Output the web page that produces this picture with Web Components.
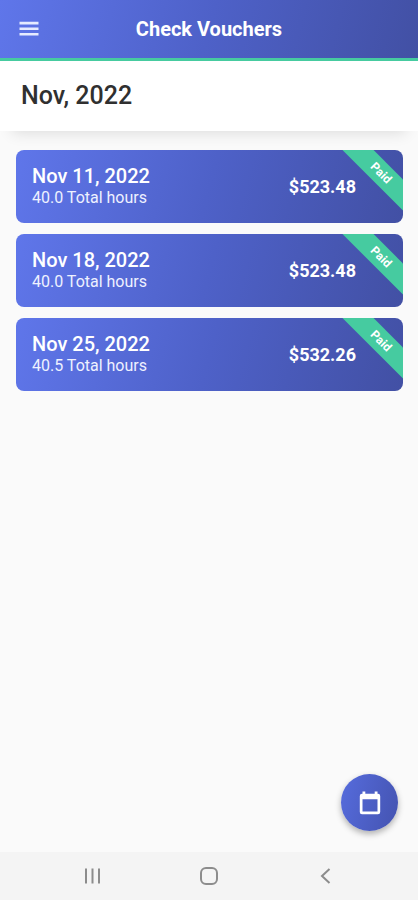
<!DOCTYPE html>
<html lang="en">
<head>
<meta charset="utf-8">
<meta name="viewport" content="width=device-width, initial-scale=1">
<title>Check Vouchers</title>
<style>
  html, body { margin: 0; height: 100%; }
  body {
    font-family: Roboto, "Liberation Sans", sans-serif;
    background: #fafafa;
    color: #303030;
    --brand: linear-gradient(105deg, #5f76ea 0%, #4e61c8 50%, #4250a4 100%);
    --accent: #46cba0;
  }
</style>
</head>
<body>
<voucher-page></voucher-page>

<script>
  // shared helper: every element renders a static template in an open root
  class BaseElement extends HTMLElement {
    constructor() {
      super();
      this.attachShadow({ mode: 'open' });
      const tpl = document.createElement('template');
      tpl.innerHTML = this.render();
      this.shadowRoot.appendChild(tpl.content.cloneNode(true));
    }
  }

  class AppHeader extends BaseElement {
    render() {
      return `
        <style>
          :host { display: block; }
          header {
            display: grid;
            grid-template-columns: 58px 1fr 58px;
            align-items: center;
            height: 58px;
            background: var(--brand);
            border-bottom: 3px solid var(--accent);
            color: #fff;
          }
          button {
            display: flex;
            justify-content: center;
            padding: 16px 0;
            border: 0;
            background: none;
            color: #e6ebff;
            cursor: pointer;
          }
          h1 {
            margin: 0;
            font-size: 20px;
            line-height: 24px;
            font-weight: 700;
            text-align: center;
          }
        </style>
        <header>
          <button type="button" aria-label="Menu">
            <svg width="24" height="24" viewBox="0 0 24 24" fill="currentColor"><path d="M2.500 4.800h19v2.600h-19zM2.500 10.400h19V13h-19zM2.500 16h19v2.600h-19z"/></svg>
          </button>
          <h1><slot></slot></h1>
        </header>
      `;
    }
  }
  customElements.define('app-header', AppHeader);

  class MonthBar extends BaseElement {
    render() {
      return `
        <style>
          :host {
            display: block;
            padding: 20px 21px;
            background: #fff;
            box-shadow: 0 14px 14px -12px rgba(0, 0, 0, 0.12);
          }
          h2 {
            margin: 0;
            font-size: 25px;
            line-height: 30px;
            font-weight: 500;
          }
        </style>
        <h2><slot></slot></h2>
      `;
    }
  }
  customElements.define('month-bar', MonthBar);

  class StatusRibbon extends BaseElement {
    render() {
      return `
        <style>
          /* diagonal band over the card's top right corner */
          :host {
            display: block;
            position: absolute;
            top: 12px;
            right: -38px;
            width: 120px;
            transform: rotate(45deg);
            background: var(--accent);
            color: #fff;
            font-size: 12px;
            line-height: 22px;
            font-weight: 700;
            text-align: center;
          }
        </style>
        <slot></slot>
      `;
    }
  }
  customElements.define('status-ribbon', StatusRibbon);

  class VoucherCard extends BaseElement {
    render() {
      return `
        <style>
          :host { display: block; }
          article {
            position: relative;
            overflow: hidden;
            display: flex;
            align-items: center;
            justify-content: space-between;
            padding: 15px 47px 15px 16px;
            border-radius: 8px;
            background: var(--brand);
            color: #fff;
          }
          h3 {
            margin: 0;
            font-size: 20px;
            line-height: 23px;
            font-weight: 500;
          }
          p {
            margin: 0;
            font-size: 16px;
            line-height: 20px;
            color: #eef1ff;
          }
          strong {
            font-size: 18px;
            line-height: 24px;
            font-weight: 700;
          }
        </style>
        <article>
          <div>
            <h3><slot name="date"></slot></h3>
            <p><slot name="hours"></slot></p>
          </div>
          <strong><slot name="amount"></slot></strong>
          <status-ribbon><slot name="status"></slot></status-ribbon>
        </article>
      `;
    }
  }
  customElements.define('voucher-card', VoucherCard);

  class CalendarFab extends BaseElement {
    render() {
      return `
        <style>
          :host { display: block; }
          button {
            display: flex;
            align-items: center;
            justify-content: center;
            width: 57px;
            height: 57px;
            padding: 0;
            border: 0;
            border-radius: 50%;
            background: linear-gradient(105deg, #566cdd, #4453b0);
            color: #fff;
            box-shadow: 0 3px 6px rgba(0, 0, 0, 0.3);
            cursor: pointer;
          }
        </style>
        <button type="button" aria-label="Pick a month">
          <svg width="24" height="24" viewBox="0 0 24 24" fill="currentColor"><path fill-rule="evenodd" d="M4.500 .5h2.800v2.300h9.400V.5h2.800v2.300h.5a2.200 2.200 0 0 1 2.200 2.200v16a2.200 2.200 0 0 1-2.200 2.200H4a2.200 2.200 0 0 1-2.200-2.200V5A2.200 2.200 0 0 1 4 2.800h.5zM4.500 8.200v12.400h15V8.200z"/></svg>
        </button>
      `;
    }
  }
  customElements.define('calendar-fab', CalendarFab);

  class SystemNav extends BaseElement {
    render() {
      return `
        <style>
          :host { display: block; }
          nav {
            display: flex;
            height: 48px;
            padding: 0 8%;
            background: #f4f4f4;
          }
          button {
            flex: 1;
            display: flex;
            align-items: center;
            justify-content: center;
            padding: 0;
            border: 0;
            background: none;
            color: #8c8c8c;
          }
          svg { fill: none; stroke: currentColor; stroke-width: 2; }
        </style>
        <nav aria-label="System">
          <button type="button" aria-label="Recent apps">
            <svg width="20" height="20" viewBox="0 0 20 20"><path d="M4 2.500v15M10.500 2.500v15M17 2.500v15"/></svg>
          </button>
          <button type="button" aria-label="Home">
            <svg width="20" height="20" viewBox="0 0 20 20"><rect x="2" y="2" width="16" height="16" rx="5"/></svg>
          </button>
          <button type="button" aria-label="Back">
            <svg width="20" height="20" viewBox="0 0 20 20"><path d="M13.500 3L6 10l7.500 7"/></svg>
          </button>
        </nav>
      `;
    }
  }
  customElements.define('system-nav', SystemNav);

  class VoucherPage extends BaseElement {
    render() {
      const vouchers = [
        { date: 'Nov 11, 2022', hours: '40.0', amount: '$523.48' },
        { date: 'Nov 18, 2022', hours: '40.0', amount: '$523.48' },
        { date: 'Nov 25, 2022', hours: '40.5', amount: '$532.26' }
      ];
      return `
        <style>
          :host {
            display: flex;
            flex-direction: column;
            min-height: 100vh;
          }
          main {
            flex: 1;
            display: flex;
            flex-direction: column;
          }
          .list {
            flex: 1;
            display: flex;
            flex-direction: column;
            gap: 11px;
            padding: 19px 15px 19px 16px;
          }
          calendar-fab {
            align-self: flex-end;
            margin: 0 20px 21px 0;
          }
        </style>
        <app-header>Check Vouchers</app-header>
        <main>
          <month-bar>Nov, 2022</month-bar>
          <section class="list">
            ${vouchers.map(v => `
              <voucher-card>
                <span slot="date">${v.date}</span>
                <span slot="hours">${v.hours} Total hours</span>
                <span slot="amount">${v.amount}</span>
                <span slot="status">Paid</span>
              </voucher-card>`).join('')}
          </section>
          <calendar-fab></calendar-fab>
        </main>
        <system-nav></system-nav>
      `;
    }
  }
  customElements.define('voucher-page', VoucherPage);
</script>
</body>
</html>
